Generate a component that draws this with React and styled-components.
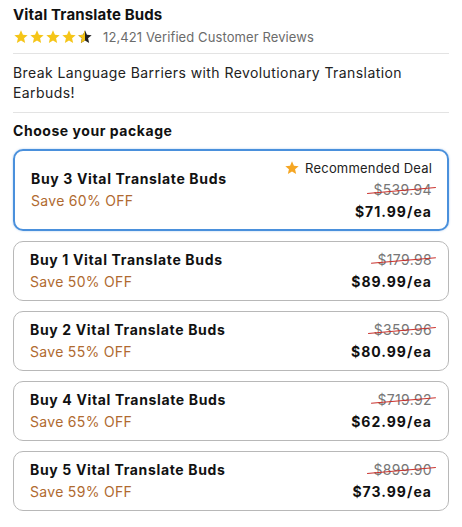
import React from "react";
import styled, { createGlobalStyle } from "styled-components";

const Global = createGlobalStyle`
  html, body { margin: 0; padding: 0; background: #fff; }
  body { font-family: Inter, "Noto Sans", sans-serif; color: #1a1a1a; }
`;

const Page = styled.div`
  width: 436px;
  padding: 5px 13px 0 13px;
  display: flex;
  flex-direction: column;
`;

const Title = styled.h1`
  margin: 0;
  font-size: 15px;
  font-weight: 700;
  letter-spacing: 0.15px;
  line-height: 20px;
  color: #111;
`;

const RatingRow = styled.div`
  display: flex;
  align-items: center;
  gap: 10px;
  margin-top: 3px;
  padding-bottom: 7px;
  border-bottom: 1px solid #e3e3e3;
`;

const Stars = styled.div`
  display: flex;
  gap: 0;
`;

const Reviews = styled.span`
  font-size: 13px;
  color: #6b6b6b;
  letter-spacing: 0.1px;
  line-height: 18px;
`;

const Desc = styled.p`
  margin: 0;
  padding: 9px 0 9px;
  font-size: 14px;
  line-height: 20px;
  letter-spacing: 0.42px;
  color: #222;
  border-bottom: 1px solid #e3e3e3;
`;

const Heading = styled.h2`
  margin: 8px 0 8px;
  font-size: 14px;
  font-weight: 700;
  letter-spacing: 0.55px;
  line-height: 20px;
  color: #111;
`;

const List = styled.div`
  display: flex;
  flex-direction: column;
  gap: 10px;
`;

const Card = styled.div`
  box-sizing: border-box;
  display: flex;
  justify-content: space-between;
  align-items: center;
  border: ${(p) => (p.$active ? "2px solid #4a90dc" : "1px solid #b8b8b8")};
  box-shadow: ${(p) => (p.$active ? "0 0 2px rgba(74,144,220,0.5)" : "none")};
  border-radius: 10px;
  padding: ${(p) => (p.$active ? "6px 15px 6px 16px" : "6px 16px 6px 16px")};
  height: ${(p) => (p.$active ? "82px" : "60px")};
`;

const Left = styled.div`
  display: flex;
  flex-direction: column;
  gap: 2px;
`;

const Name = styled.div`
  font-size: 14px;
  font-weight: 700;
  letter-spacing: 0.65px;
  line-height: 20px;
  color: #111;
`;

const Save = styled.div`
  font-size: 14px;
  letter-spacing: 0.3px;
  line-height: 20px;
  color: #b06a30;
`;

const Right = styled.div`
  display: flex;
  flex-direction: column;
  align-items: flex-end;
  gap: 2px;
`;

const Badge = styled.div`
  display: flex;
  align-items: center;
  gap: 5px;
  font-size: 13px;
  letter-spacing: 0.2px;
  line-height: 18px;
  color: #222;
  margin-bottom: 1px;
`;

const Old = styled.span`
  position: relative;
  font-size: 14px;
  letter-spacing: 0.35px;
  line-height: 20px;
  color: #777;
  &::after {
    content: "";
    position: absolute;
    left: -6px;
    right: -4px;
    top: 50%;
    height: 1.3px;
    background: #c9302c;
    transform: rotate(-5deg);
  }
`;

const Price = styled.span`
  font-size: 14px;
  font-weight: 700;
  letter-spacing: 1px;
  line-height: 20px;
  color: #111;
`;

const STAR = "M12 2l2.9 6.6 7.1.6-5.4 4.7 1.6 7-6.2-3.7-6.2 3.7 1.6-7L2 9.2l7.1-.6z";

const Star = ({ fill = "#f5c518", half = false, size = 16 }) => (
  <svg width={size} height={size} viewBox="0 0 24 24">
    <defs>
      <clipPath id="halfclip">
        <rect x="0" y="0" width="12" height="24" />
      </clipPath>
    </defs>
    {half ? (
      <>
        <path d={STAR} fill="#222" />
        <path d={STAR} fill={fill} clipPath="url(#halfclip)" />
      </>
    ) : (
      <path d={STAR} fill={fill} />
    )}
  </svg>
);

const packages = [
  { n: 3, save: 60, old: "$539.94", price: "$71.99/ea", active: true },
  { n: 1, save: 50, old: "$179.98", price: "$89.99/ea" },
  { n: 2, save: 55, old: "$359.96", price: "$80.99/ea" },
  { n: 4, save: 65, old: "$719.92", price: "$62.99/ea" },
  { n: 5, save: 59, old: "$899.90", price: "$73.99/ea" },
];

export default function App() {
  return (
    <>
      <Global />
      <Page>
        <Title>Vital Translate Buds</Title>
        <RatingRow>
          <Stars>
            <Star />
            <Star />
            <Star />
            <Star />
            <Star half />
          </Stars>
          <Reviews>12,421 Verified Customer Reviews</Reviews>
        </RatingRow>
        <Desc>Break Language Barriers with Revolutionary Translation Earbuds!</Desc>
        <Heading>Choose your package</Heading>
        <List>
          {packages.map((p) => (
            <Card key={p.n} $active={p.active}>
              <Left>
                <Name>Buy {p.n} Vital Translate Buds</Name>
                <Save>Save {p.save}% OFF</Save>
              </Left>
              <Right>
                {p.active && (
                  <Badge>
                    <Star fill="#f5a623" size={16} />
                    Recommended Deal
                  </Badge>
                )}
                <Old>{p.old}</Old>
                <Price>{p.price}</Price>
              </Right>
            </Card>
          ))}
        </List>
      </Page>
    </>
  );
}
